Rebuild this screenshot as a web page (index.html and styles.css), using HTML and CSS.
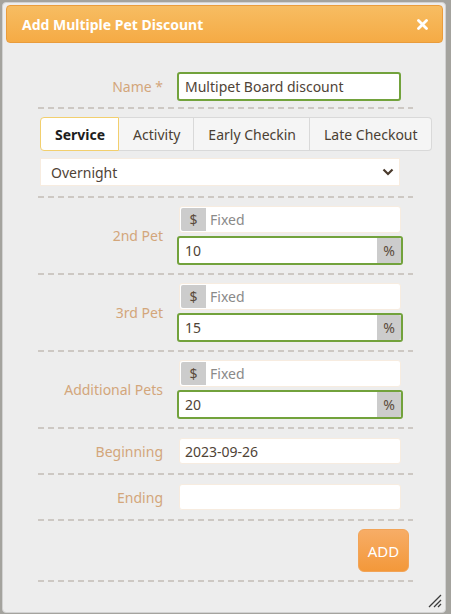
FILE: index.html
```html
<!DOCTYPE html>
<html lang="en">
	<head>
		<meta charset="UTF-8" />
		<meta name="viewport" content="width=device-width, initial-scale=1.0" />
		<title>Add Multiple Pet Discount</title>
		<link rel="stylesheet" href="styles.css">
	</head>
	<body>
		<div class="dialog">
			<div class="titlebar">
				<span class="title">Add Multiple Pet Discount</span>
				<svg class="close" width="11" height="11" viewBox="0 0 11 11">
					<path d="M1.5 1.5 L9.5 9.5 M9.5 1.5 L1.5 9.5" stroke="#fff" stroke-width="2.8" stroke-linecap="round" />
				</svg>
			</div>

			<div class="content">
				<div class="row first">
					<label class="lbl">Name *</label>
					<div class="box focus name"><input type="text" value="Multipet Board discount" /></div>
				</div>

				<div class="row types">
					<ul class="tabs">
						<li class="active">Service</li>
						<li>Activity</li>
						<li>Early Checkin</li>
						<li>Late Checkout</li>
					</ul>
					<div class="select">
						<span>Overnight</span>
						<svg width="12" height="8" viewBox="0 0 12 8">
							<path d="M1.5 1.5 L6 6 L10.5 1.5" fill="none" stroke="#4a3a2c" stroke-width="2.2" />
						</svg>
					</div>
				</div>

				<div class="row">
					<label class="lbl">2nd Pet</label>
					<div class="pair">
						<div class="box"><span class="addon">$</span><input type="text" placeholder="Fixed" /></div>
						<div class="box focus"><input type="text" value="10" /><span class="addon right">%</span></div>
					</div>
				</div>

				<div class="row">
					<label class="lbl">3rd Pet</label>
					<div class="pair">
						<div class="box"><span class="addon">$</span><input type="text" placeholder="Fixed" /></div>
						<div class="box focus"><input type="text" value="15" /><span class="addon right">%</span></div>
					</div>
				</div>

				<div class="row">
					<label class="lbl">Additional Pets</label>
					<div class="pair">
						<div class="box"><span class="addon">$</span><input type="text" placeholder="Fixed" /></div>
						<div class="box focus"><input type="text" value="20" /><span class="addon right">%</span></div>
					</div>
				</div>

				<div class="row date">
					<label class="lbl">Beginning</label>
					<div class="box"><input type="text" value="2023-09-26" /></div>
				</div>

				<div class="row date">
					<label class="lbl">Ending</label>
					<div class="box"><input type="text" value="" /></div>
				</div>

				<div class="row actions">
					<button class="add">ADD</button>
				</div>
			</div>

			<svg class="grip" width="16" height="16" viewBox="0 0 16 16">
				<path d="M15 3 L3 15 M15 8 L8 15 M15 12 L12 15" stroke="#3c3c3c" stroke-width="1.3" />
			</svg>
		</div>
	</body>
</html>
```

FILE: styles.css
```css
body {
	margin: 0;
	background: #a4a39e;
	font-family: "Noto Sans", "Open Sans", sans-serif;
	font-size: 14px;
	color: #4f4336;
}
ul {
	margin: 0;
	padding: 0;
	list-style: none;
}
input,
button {
	font: inherit;
	color: inherit;
}
.dialog {
	margin: 2px;
	width: 442px;
	height: 609px;
	border: 1px solid #d2d2d2;
	border-radius: 4px;
	background: #ededed;
	position: relative;
}
.titlebar {
	margin: 2px 2px 0 3px;
	height: 36px;
	border: 1px solid #e99c3c;
	border-radius: 4px;
	background: linear-gradient(#f7bd62, #f5ab45);
	display: flex;
	align-items: center;
	justify-content: space-between;
	padding: 0 14px 0 15px;
}
.title {
	color: #fff;
	font-weight: bold;
	font-size: 14px;
}
.content {
	width: 375px;
	margin-left: 35px;
	padding-top: 21px;
}
.row {
	display: flex;
	align-items: center;
	padding: 8px 0 10px;
	background: repeating-linear-gradient(90deg, #cdc8c3 0 6px, transparent 6px 10px) left bottom / 100% 2px no-repeat;
}
.row.first {
	padding-bottom: 8px;
}
.row.date {
	padding: 9px 0 11px;
}
.lbl {
	flex: 0 0 141px;
	box-sizing: border-box;
	padding-right: 16px;
	text-align: right;
	color: #d3a67b;
}
.box {
	box-sizing: border-box;
	width: 222px;
	height: 26px;
	border: 1px solid #f7ece0;
	border-radius: 3px;
	background: #fff;
	display: flex;
	padding: 1px;
}
.box input {
	flex: 1;
	min-width: 0;
	border: none;
	outline: none;
	background: transparent;
	padding: 0 0 0 4px;
}
.box input::placeholder {
	color: #8a8a8a;
}
.box.focus {
	width: 226px;
	height: 29px;
	margin-left: -2px;
	border: 2px solid #72a23c;
	padding: 0;
}
.box.focus input {
	padding-left: 6px;
}
.box.name {
	width: 224px;
	height: 29px;
}
.pair {
	display: flex;
	flex-direction: column;
	gap: 3px;
}
.pair .box:first-child {
	height: 27px;
}
.addon {
	width: 25px;
	background: #cccccc;
	border-radius: 2px 0 0 2px;
	display: flex;
	align-items: center;
	justify-content: center;
	font-size: 14px;
	color: #5b4b3b;
}
.addon.right {
	width: 24px;
	border-radius: 0 2px 2px 0;
}
.types {
	flex-direction: column;
	align-items: flex-start;
	gap: 7px;
	padding: 8px 0 12px;
}
.tabs {
	display: flex;
	flex-shrink: 0;
	width: max-content;
	margin-left: 2px;
	height: 34px;
	white-space: nowrap;
}
.tabs li {
	display: flex;
	align-items: center;
	padding: 0 13px 0 14px;
	background: #f5f5f5;
	border: 1px solid #d9d9d9;
	border-left: none;
	color: #4b3f33;
}
.tabs li:last-child {
	border-radius: 0 4px 4px 0;
}
.tabs li.active {
	background: #fff;
	border: 1px solid #f2cf6e;
	border-radius: 4px 0 0 4px;
	font-weight: bold;
	color: #1d1d1d;
}
.select {
	box-sizing: border-box;
	margin-left: 2px;
	width: 360px;
	height: 28px;
	background: #fff;
	border: 1px solid #f7ece0;
	display: flex;
	align-items: center;
	justify-content: space-between;
	padding: 0 5px 0 10px;
}
.actions {
	justify-content: flex-end;
	padding: 8px 0 10px;
}
.add {
	margin-right: 4px;
	width: 51px;
	height: 43px;
	border: 1px solid #f2a457;
	border-radius: 6px;
	background: linear-gradient(#f7ad66, #f3983a);
	color: #fff;
	font-size: 15px;
	padding: 0;
}
.grip {
	position: absolute;
	right: 3px;
	bottom: 4px;
}
```
